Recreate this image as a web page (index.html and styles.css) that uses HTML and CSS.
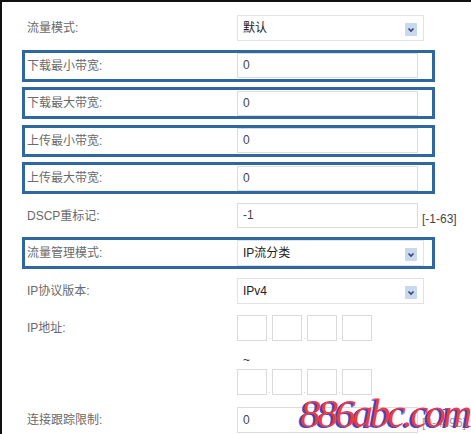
FILE: index.html
```html
<!DOCTYPE html>
<html lang="zh-CN">
<head>
<meta charset="utf-8">
<title>流量管理</title>
<link rel="stylesheet" href="styles.css">
</head>
<body>
<div class="frame">
  <div class="form">
    <div class="row">
      <div class="label">流量模式:</div>
      <div class="select"><span class="sel-text">默认</span><span class="arrow"><svg viewBox="0 0 12 13" width="12" height="13"><path d="M3.5 5.5 L6 8 L8.5 5.5" fill="none" stroke="#33496e" stroke-width="1.6"/></svg></span></div>
    </div>
    <div class="row hl">
      <div class="label">下载最小带宽:</div>
      <div class="input">0</div>
    </div>
    <div class="row hl">
      <div class="label">下载最大带宽:</div>
      <div class="input">0</div>
    </div>
    <div class="row hl">
      <div class="label">上传最小带宽:</div>
      <div class="input">0</div>
    </div>
    <div class="row hl">
      <div class="label">上传最大带宽:</div>
      <div class="input">0</div>
    </div>
    <div class="row">
      <div class="label">DSCP重标记:</div>
      <div class="input">-1</div>
      <div class="range">[-1-63]</div>
    </div>
    <div class="row hl">
      <div class="label">流量管理模式:</div>
      <div class="select"><span class="sel-text">IP流分类</span><span class="arrow"><svg viewBox="0 0 12 13" width="12" height="13"><path d="M3.5 5.5 L6 8 L8.5 5.5" fill="none" stroke="#33496e" stroke-width="1.6"/></svg></span></div>
    </div>
    <div class="row">
      <div class="label">IP协议版本:</div>
      <div class="select"><span class="sel-text">IPv4</span><span class="arrow"><svg viewBox="0 0 12 13" width="12" height="13"><path d="M3.5 5.5 L6 8 L8.5 5.5" fill="none" stroke="#33496e" stroke-width="1.6"/></svg></span></div>
    </div>
    <div class="row tall">
      <div class="label">IP地址:</div>
      <div class="ipcol">
        <div class="ipline">
          <span class="oct"></span><span class="dot">.</span><span class="oct"></span><span class="dot">.</span><span class="oct"></span><span class="dot">.</span><span class="oct"></span>
        </div>
        <div class="tilde">~</div>
        <div class="ipline">
          <span class="oct"></span><span class="dot">.</span><span class="oct"></span><span class="dot">.</span><span class="oct"></span><span class="dot">.</span><span class="oct"></span>
        </div>
      </div>
    </div>
    <div class="row">
      <div class="label">连接跟踪限制:</div>
      <div class="input big">0</div>
      <div class="range faint">[0-4096]</div>
    </div>
  </div>
  <div class="watermark">886abc.com</div>
</div>
</body>
</html>
```
FILE: styles.css
```css
html, body {
  margin: 0;
  padding: 0;
  background: #fff;
}
.frame {
  position: relative;
  width: 469px;
  height: 432px;
  border-top: 2px solid #111;
  border-left: 2px solid #111;
  overflow: hidden;
  font-family: "Liberation Sans", Arial, "Noto Sans CJK SC", sans-serif;
  font-size: 12px;
  color: #555;
}
.form {
  padding: 10px 0 0 20px;
  display: flex;
  flex-direction: column;
  gap: 5.5px;
}
.row {
  box-sizing: border-box;
  width: 413px;
  height: 32px;
  border: 3px solid transparent;
  display: flex;
  align-items: center;
}
.row.hl {
  border-color: #2f68a0;
}
.row.tall {
  height: auto;
  align-items: flex-start;
}
.label {
  box-sizing: border-box;
  flex: 0 0 212px;
  padding-left: 2px;
  color: #6a6a6a;
  line-height: 26px;
}
.input {
  box-sizing: border-box;
  flex: 0 0 181px;
  height: 25px;
  border: 1px solid #dcdcdc;
  padding-left: 5px;
  line-height: 23px;
  color: #444;
}
.input.big {
  height: 26px;
  line-height: 24px;
}
.select {
  box-sizing: border-box;
  flex: 0 0 187px;
  height: 26px;
  border: 1px solid #e2e2e2;
  display: flex;
  align-items: center;
  justify-content: space-between;
  padding: 0 6px 0 5px;
  color: #222;
}
.sel-text {
  line-height: 24px;
}
.arrow {
  display: flex;
  width: 12px;
  height: 13px;
  background: #c9d7ef;
  border-radius: 1px;
  margin-top: 3px;
}
.range {
  flex: 0 0 auto;
  margin-left: 4px;
  padding-top: 6px;
  color: #444;
  white-space: nowrap;
}
.range.faint {
  color: #999;
}
.ipcol {
  display: flex;
  flex-direction: column;
}
.ipline {
  display: flex;
  align-items: flex-end;
  height: 26px;
}
.oct {
  box-sizing: border-box;
  width: 30px;
  height: 26px;
  border: 1px solid #dadada;
}
.dot {
  width: 5px;
  font-size: 8px;
  line-height: 8px;
  color: #bbb;
  text-align: center;
}
.tilde {
  height: 28px;
  box-sizing: border-box;
  padding: 12px 0 0 6px;
  line-height: 14px;
  color: #333;
}
.watermark {
  position: absolute;
  left: 298px;
  top: 389px;
  font-family: "Liberation Serif", "Times New Roman", serif;
  font-style: italic;
  font-size: 41px;
  line-height: 44px;
  letter-spacing: -3px;
  color: #ef3a3f;
  text-shadow: -2px 1px 0 #2f4fe6;
  white-space: nowrap;
}
```
